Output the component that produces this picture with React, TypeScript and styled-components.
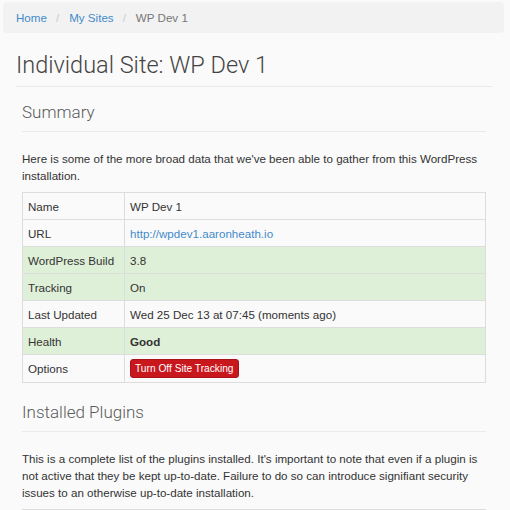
import styled, { createGlobalStyle } from "styled-components";

const GlobalStyle = createGlobalStyle`
  html, body {
    margin: 0;
    padding: 0;
    background: #fafafa;
  }
  body {
    font-family: "Liberation Sans", Arial, sans-serif;
    font-size: 11.6px;
    line-height: 17px;
    color: #333;
  }
`;

const Page = styled.div`
  padding: 2px 6px 0 3px;
`;

const Breadcrumb = styled.ol`
  list-style: none;
  margin: 0;
  padding: 7px 13px;
  height: 31px;
  box-sizing: border-box;
  background: #f2f2f2;
  border-radius: 4px;
  display: flex;
  align-items: center;
`;

const Crumb = styled.li<{ $active?: boolean }>`
  color: ${(p) => (p.$active ? "#777" : "#428bca")};
  & + li::before {
    content: "/";
    color: #ccc;
    padding: 0 10px 0 9px;
  }
`;

const Content = styled.div`
  padding: 0 12px 0 13px;
`;

const PageTitle = styled.h1`
  margin: 19px 0 0;
  padding-bottom: 8px;
  border-bottom: 1px solid #eaeaea;
  font-family: "Roboto", "Liberation Sans", sans-serif;
  font-weight: 300;
  font-size: 23.5px;
  line-height: 26px;
  color: #444;
`;

const Section = styled.section`
  padding: 0 6px;
`;

const SectionTitle = styled.h3<{ $first?: boolean }>`
  margin: ${(p) => (p.$first ? "16px" : "20px")} 0 0;
  padding-bottom: 9px;
  border-bottom: 1px solid #eaeaea;
  font-family: "Roboto", "Liberation Sans", sans-serif;
  font-weight: 300;
  font-size: 17px;
  line-height: 19px;
  color: #5a5a5a;
`;

const Lead = styled.p`
  margin: 18px 0 8px;
`;

const Table = styled.table`
  width: 100%;
  border-collapse: collapse;
  border: 1px solid #ddd;
  margin-bottom: 0;
`;

const Row = styled.tr<{ $success?: boolean }>`
  background: ${(p) => (p.$success ? "#dff0d8" : "#fafafa")};
`;

const Cell = styled.td<{ $label?: boolean }>`
  border: 1px solid #ddd;
  padding: 4px 5px;
  height: 18px;
  width: ${(p) => (p.$label ? "91px" : "auto")};
  vertical-align: middle;
`;

const Link = styled.a`
  color: #428bca;
  text-decoration: none;
`;

const DangerButton = styled.button`
  font-family: "Liberation Sans", Arial, sans-serif;
  font-size: 10.2px;
  line-height: 15px;
  padding: 1px 4px;
  color: #fff;
  background: #c9171e;
  border: 1px solid #a8121a;
  border-radius: 3px;
  cursor: pointer;
`;

const rows: { label: string; value: React.ReactNode; success?: boolean }[] = [
  { label: "Name", value: "WP Dev 1" },
  {
    label: "URL",
    value: <Link href="#">http://wpdev1.aaronheath.io</Link>,
  },
  { label: "WordPress Build", value: "3.8", success: true },
  { label: "Tracking", value: "On", success: true },
  { label: "Last Updated", value: "Wed 25 Dec 13 at 07:45 (moments ago)" },
  { label: "Health", value: <strong>Good</strong>, success: true },
  {
    label: "Options",
    value: <DangerButton>Turn Off Site Tracking</DangerButton>,
  },
];

export default function App() {
  return (
    <>
      <GlobalStyle />
      <Page>
        <Breadcrumb>
          <Crumb>Home</Crumb>
          <Crumb>My Sites</Crumb>
          <Crumb $active>WP Dev 1</Crumb>
        </Breadcrumb>
        <Content>
          <PageTitle>Individual Site: WP Dev 1</PageTitle>
          <Section>
            <SectionTitle $first>Summary</SectionTitle>
            <Lead>
              Here is some of the more broad data that we've been able to
              gather from this WordPress installation.
            </Lead>
            <Table>
              <tbody>
                {rows.map((r) => (
                  <Row key={r.label} $success={r.success}>
                    <Cell $label>{r.label}</Cell>
                    <Cell>{r.value}</Cell>
                  </Row>
                ))}
              </tbody>
            </Table>
            <SectionTitle>Installed Plugins</SectionTitle>
            <Lead>
              This is a complete list of the plugins installed. It's important
              to note that even if a plugin is not active that they be kept
              up-to-date. Failure to do so can introduce signifiant security
              issues to an otherwise up-to-date installation.
            </Lead>
            <Table>
              <tbody>
                <Row>
                  <Cell $label>&nbsp;</Cell>
                  <Cell>&nbsp;</Cell>
                </Row>
              </tbody>
            </Table>
          </Section>
        </Content>
      </Page>
    </>
  );
}
